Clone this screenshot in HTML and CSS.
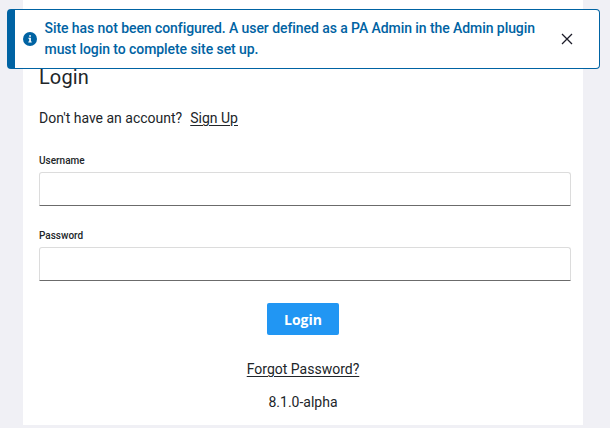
FILE: index.html
```html
<!DOCTYPE html>
<html lang="en">
<head>
<meta charset="utf-8">
<title>Login</title>
<link rel="stylesheet" href="styles.css">
</head>
<body>
<main class="card">
  <h1 class="title">Login</h1>
  <p class="signup"><span>Don't have an account?</span><a class="link" href="#">Sign Up</a></p>
  <form class="form">
    <label class="label" for="username">Username</label>
    <input class="input" id="username" type="text">
    <label class="label" for="password">Password</label>
    <input class="input" id="password" type="password">
    <button class="submit" type="button">Login</button>
  </form>
  <a class="link forgot" href="#">Forgot Password?</a>
  <p class="version">8.1.0-alpha</p>
</main>
<div class="alert" role="alert">
  <svg class="info" viewBox="0 0 14 14"><circle cx="7" cy="7" r="7" fill="#0063a3"/><path d="M6.2 3.2h1.7v1.5H6.2zM5.4 5.8h2.5v3.7h.8v1H5.3v-1h.9V6.8h-.8z" fill="#fff"/></svg>
  <p class="message">Site has not been configured. A user defined as a PA Admin in the Admin plugin<br>must login to complete site set up.</p>
  <svg class="close" viewBox="0 0 12 12"><path d="M1 1l10 10M11 1L1 11" stroke="#1c1c28" stroke-width="1.3" fill="none"/></svg>
</div>
</body>
</html>
```
FILE: styles.css
```css
* { box-sizing: border-box; }
body {
  margin: 0;
  height: 428px;
  overflow: hidden;
  background: #f0f0f5;
  color: #212529;
  font: 14px/20px Roboto, sans-serif;
}
p, h1 { margin: 0; }
.card {
  display: flex;
  flex-direction: column;
  width: 560px;
  height: 425px;
  margin-left: 23px;
  padding: 65px 12px 0 16px;
  background: #fff;
}
.title {
  font-size: 20px;
  line-height: 24px;
  font-weight: 400;
  letter-spacing: 0.1px;
}
.signup {
  display: flex;
  gap: 8px;
  margin-top: 19px;
}
.link {
  color: inherit;
  text-decoration: underline;
  text-underline-offset: 2px;
}
.form {
  display: flex;
  flex-direction: column;
  margin-top: 25px;
}
.label {
  height: 19px;
  font-size: 10px;
  line-height: 16px;
  font-weight: 500;
}
.input {
  width: 532px;
  height: 34px;
  margin-bottom: 22px;
  border: 1px solid #dcdcdc;
  border-bottom-color: #6b6b6b;
  border-radius: 3px 3px 0 0;
  background: #fff;
}
.submit {
  align-self: center;
  width: 72px;
  height: 32px;
  margin-right: 4px;
  padding: 2px 0 0;
  border: 0;
  border-radius: 2px;
  background: #2196f3;
  color: #fff;
  font: 700 14px/30px "Open Sans", sans-serif;
}
.forgot {
  align-self: center;
  margin: 24px 4px 0 0;
}
.version {
  align-self: center;
  margin: 13px 4px 0 0;
}
.alert {
  position: absolute;
  left: 7px;
  top: 9px;
  display: flex;
  align-items: center;
  width: 593px;
  height: 60px;
  padding-left: 8px;
  border: 1px solid #0063a3;
  border-left-width: 8px;
  border-radius: 4px;
  background: #fff;
}
.info {
  width: 14px;
  height: 14px;
}
.message {
  width: 500px;
  margin-left: 7.5px;
  color: #0063a3;
  font-size: 14px;
  line-height: 21px;
  font-weight: 500;
  letter-spacing: -0.07px;
  white-space: nowrap;
}
.close {
  width: 12px;
  height: 12px;
  margin-left: 16px;
}
```
